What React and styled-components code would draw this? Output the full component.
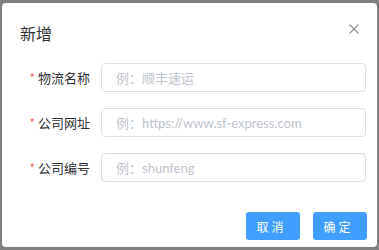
import styled, { createGlobalStyle } from 'styled-components';

const GlobalStyle = createGlobalStyle`
  html, body {
    margin: 0;
    padding: 0;
    background: #808080;
    font-family: "Noto Sans", "Noto Sans CJK SC", sans-serif;
  }
  * {
    box-sizing: border-box;
  }
`;

const fields = [
  { label: '物流名称', placeholder: '例：顺丰速运' },
  { label: '公司网址', placeholder: '例：https://www.sf-express.com' },
  { label: '公司编号', placeholder: '例：shunfeng' },
];

const App = () => {
  return (
    <>
      <GlobalStyle />
      <Dialog>
        <Header>
          <Title>新增</Title>
          <Close aria-label="close">
            <svg width="10" height="10" viewBox="0 0 10 10">
              <path d="M0.5 0.5 L9.5 9.5 M9.5 0.5 L0.5 9.5" stroke="#909399" strokeWidth="1.1" fill="none" />
            </svg>
          </Close>
        </Header>
        <Form>
          {fields.map((f) => (
            <Row key={f.label}>
              <Label>
                <Star>*</Star>
                {f.label}
              </Label>
              <Input placeholder={f.placeholder} />
            </Row>
          ))}
        </Form>
        <Footer>
          <Button>取消</Button>
          <Button>确定</Button>
        </Footer>
      </Dialog>
    </>
  );
};

const Dialog = styled.div`
  margin: 3px 2px 0 2px;
  width: 375px;
  height: 244px;
  background: #ffffff;
  border-radius: 4px;
  display: flex;
  flex-direction: column;
`;

const Header = styled.div`
  display: flex;
  align-items: center;
  justify-content: space-between;
  padding: 18px 18px 0 18px;
  height: 42px;
`;

const Title = styled.div`
  font-size: 16px;
  line-height: 24px;
  color: #303133;
  font-family: "Noto Sans CJK SC", sans-serif;
`;

const Close = styled.button`
  border: none;
  background: none;
  padding: 0;
  width: 10px;
  height: 10px;
  margin-top: -9px;
  margin-right: 0;
  display: flex;
  cursor: pointer;
`;

const Form = styled.div`
  display: flex;
  flex-direction: column;
  gap: 16px;
  padding: 18px 11px 0 0;
`;

const Row = styled.div`
  display: flex;
  align-items: center;
  gap: 11px;
`;

const Label = styled.label`
  width: 88px;
  text-align: right;
  font-size: 13px;
  color: #303133;
  font-family: "Noto Sans CJK SC", sans-serif;
`;

const Star = styled.span`
  color: #f56c6c;
  margin-right: 3px;
  font-size: 12px;
`;

const Input = styled.input`
  flex: 1;
  height: 29px;
  border: 1px solid #dcdfe6;
  border-radius: 4px;
  padding: 0 14px;
  font-size: 13px;
  color: #606266;
  font-family: Lato, "Noto Sans CJK SC", sans-serif;
  outline: none;
  &::placeholder {
    color: #c0c4cc;
  }
`;

const Footer = styled.div`
  margin-top: auto;
  display: flex;
  justify-content: flex-end;
  gap: 13px;
  padding: 0 10px 7px 0;
`;

const Button = styled.button`
  width: 54px;
  height: 28px;
  border: none;
  border-radius: 3px;
  background: #409eff;
  color: #ffffff;
  font-size: 12px;
  letter-spacing: 3px;
  padding-left: 3px;
  font-family: "Noto Sans CJK SC", sans-serif;
  cursor: pointer;
`;

export default App;
